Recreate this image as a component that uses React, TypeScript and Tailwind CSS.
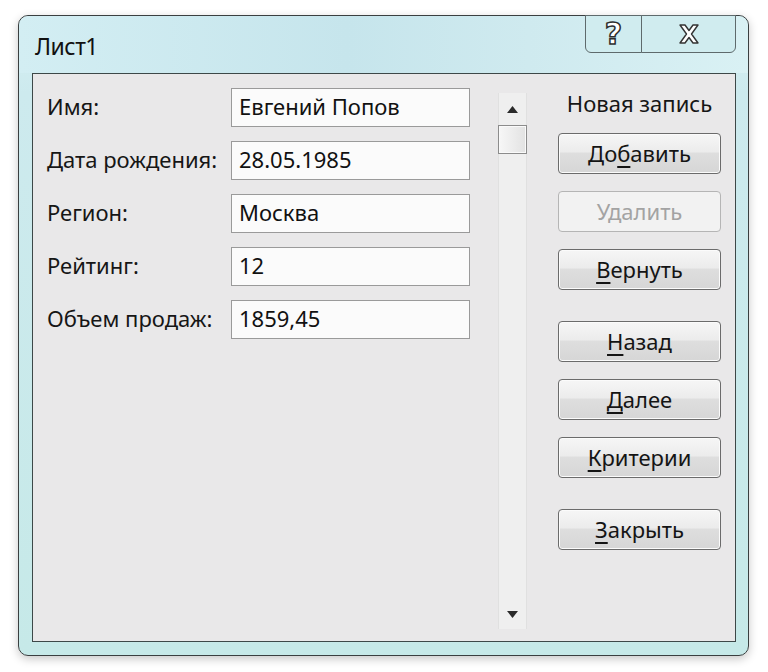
import React, { FC } from "react";

const font = "font-['Noto_Sans','Open_Sans',sans-serif]";

const fields = [
  { label: "Имя:", value: "Евгений Попов" },
  { label: "Дата рождения:", value: "28.05.1985" },
  { label: "Регион:", value: "Москва" },
  { label: "Рейтинг:", value: "12" },
  { label: "Объем продаж:", value: "1859,45" },
];

interface DialogButtonProps {
  pre?: string;
  hot?: string;
  post?: string;
  disabled?: boolean;
  className?: string;
}

const DialogButton: FC<DialogButtonProps> = ({ pre = "", hot = "", post = "", disabled = false, className = "" }) => {
  return (
    <div
      className={`flex h-[41px] w-[163px] items-center justify-center rounded-[4px] border text-[22px] leading-7 ${
        disabled
          ? "border-[#b5b5b5] bg-[#f2f2f2] text-[#a3a3a3]"
          : "border-[#6b6b6b] bg-[linear-gradient(#f6f6f6,#ececec_45%,#dedede_50%,#d6d6d6)] text-[#141414] shadow-[inset_0_0_0_1px_#fbfbfb]"
      } ${className}`}
    >
      <span className="-mt-[2px]">
        {pre}
        {hot && <span className="underline decoration-2 underline-offset-[4px]">{hot}</span>}
        {post}
      </span>
    </div>
  );
};

const App: FC = () => {
  return (
    <div className={`min-h-[672px] w-[768px] bg-white pl-[18px] pt-[15px] ${font}`}>
      <div className="flex h-[641px] w-[731px] flex-col rounded-[10px] border border-[#3a3f40] bg-[linear-gradient(#d6eff3,#cdeaee_12%,#c6e9e8)] shadow-[0_3px_10px_rgba(0,0,0,0.22)]">
        {/* title bar */}
        <div className="flex h-[57px] items-start justify-between rounded-t-[10px] bg-[linear-gradient(90deg,#d3eef3,#c6e5ec_45%,#cfeaef_70%,#d9f1f4)] pl-[16px] pr-[12px]">
          <span className="mt-[15px] text-[23px] leading-[30px] tracking-[-0.5px] text-[#111]">Лист1</span>
          <div className="-mt-px flex h-[38px]">
            <div className="flex w-[57px] items-center justify-center rounded-bl-[6px] border border-[#5e6a6c] bg-[#d0ecef] font-['DejaVu_Sans',sans-serif] text-[30px] font-bold leading-none text-white [-webkit-text-stroke:1.5px_#2e2e2e]">
              ?
            </div>
            <div className="-ml-px flex w-[95px] items-center justify-center rounded-br-[6px] border border-[#5e6a6c] bg-[#d0ecef]">
              <svg width="24" height="22" viewBox="0 0 24 22">
                <path
                  d="M3 2h5l4 5.5L16 2h5l-6.5 9L21 20h-5l-4-5.5L8 20H3l6.5-9z"
                  fill="#fff"
                  stroke="#333"
                  strokeWidth="1.4"
                  strokeLinejoin="round"
                />
              </svg>
            </div>
          </div>
        </div>

        {/* client area */}
        <div className="mx-[13px] mb-[13px] mr-[12px] flex flex-1 border border-[#3d4848] bg-[#e9e8e9]">
          {/* form */}
          <div className="flex flex-col gap-[14px] pl-[14px] pt-[14px]">
            {fields.map((f) => (
              <div key={f.label} className="flex items-center">
                <span className="-mt-[3px] w-[184px] whitespace-nowrap text-[22px] leading-7 text-[#161616]">{f.label}</span>
                <div className="flex h-[39px] w-[239px] items-center border border-[#9a9a9a] bg-[#fbfbfb] pb-[3px] pl-[7px] text-[22px] leading-7 text-[#111]">
                  {f.value}
                </div>
              </div>
            ))}
          </div>

          {/* scrollbar */}
          <div className="mb-[12px] ml-[28px] mt-[19px] flex w-[29px] flex-col border-x border-[#e0e0e0] bg-[#efefef]">
            <div className="flex h-[32px] items-center justify-center">
              <svg width="11" height="7" viewBox="0 0 11 7">
                <path d="M5.5 0L11 7H0z" fill="#2a2a2a" />
              </svg>
            </div>
            <div className="-mx-px h-[29px] border border-[#8c8c8c] bg-[linear-gradient(90deg,#f7f7f7,#e2e2e2)] shadow-[inset_0_0_0_1px_#fafafa]" />
            <div className="flex-1" />
            <div className="flex h-[30px] items-center justify-center">
              <svg width="11" height="7" viewBox="0 0 11 7">
                <path d="M0 0h11L5.5 7z" fill="#2a2a2a" />
              </svg>
            </div>
          </div>

          {/* buttons */}
          <div className="ml-[31px] flex flex-col pt-[19px]">
            <span className="-mt-[2px] text-center text-[22px] leading-6 text-[#161616]">Новая запись</span>
            <DialogButton className="mt-[18px]" pre="До" hot="б" post="авить" />
            <DialogButton className="mt-[17px]" pre="Удалить" disabled />
            <DialogButton className="mt-[17px]" hot="В" post="ернуть" />
            <DialogButton className="mt-[31px]" hot="Н" post="азад" />
            <DialogButton className="mt-[17px]" hot="Д" post="алее" />
            <DialogButton className="mt-[17px]" hot="К" post="ритерии" />
            <DialogButton className="mt-[31px]" hot="З" post="акрыть" />
          </div>
        </div>
      </div>
    </div>
  );
};

export default App;
